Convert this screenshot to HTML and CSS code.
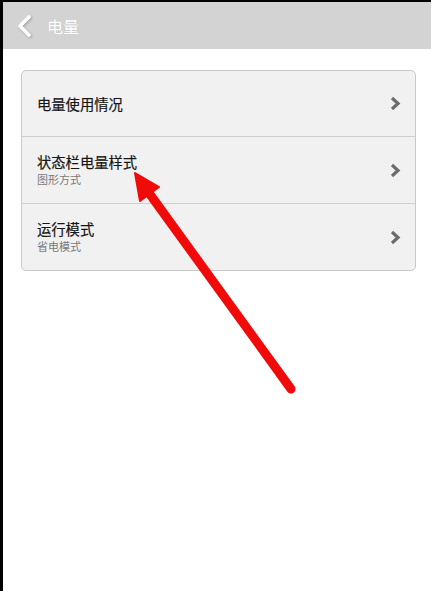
FILE: index.html
```html
<!DOCTYPE html>
<html lang="zh">
<head>
<meta charset="utf-8">
<link rel="stylesheet" href="styles.css">
</head>
<body>
<div class="screen">
  <header class="bar">
    <svg class="back" width="16" height="24" viewBox="0 0 16 24">
      <path d="M13 3 L4 12 L13 21" fill="none" stroke="#ffffff" stroke-width="3.6" stroke-linecap="round" stroke-linejoin="round"/>
    </svg>
    <span class="title">电量</span>
  </header>
  <main class="content">
    <div class="card">
      <div class="row">
        <div class="texts"><div class="main">电量使用情况</div></div>
        <svg class="chev" width="11" height="15" viewBox="0 0 11 15"><path d="M2 2 L8 7.5 L2 13" fill="none" stroke="#6c6c6c" stroke-width="3.2"/></svg>
      </div>
      <div class="row">
        <div class="texts"><div class="main">状态栏电量样式</div><div class="sub">图形方式</div></div>
        <svg class="chev" width="11" height="15" viewBox="0 0 11 15"><path d="M2 2 L8 7.5 L2 13" fill="none" stroke="#6c6c6c" stroke-width="3.2"/></svg>
      </div>
      <div class="row">
        <div class="texts"><div class="main">运行模式</div><div class="sub">省电模式</div></div>
        <svg class="chev" width="11" height="15" viewBox="0 0 11 15"><path d="M2 2 L8 7.5 L2 13" fill="none" stroke="#6c6c6c" stroke-width="3.2"/></svg>
      </div>
    </div>
  </main>
  <svg class="arrow" width="431" height="591" viewBox="0 0 431 591">
    <line x1="149" y1="193" x2="291" y2="389" stroke="#f10a0a" stroke-width="9" stroke-linecap="round"/>
    <polygon points="135,173 159,187 140,201" fill="#f10a0a" stroke="#f10a0a" stroke-width="2" stroke-linejoin="round"/>
  </svg>
</div>
</body>
</html>
```
FILE: styles.css
```css
html, body {
  margin: 0;
  padding: 0;
  background: #000;
}
.screen {
  position: relative;
  width: 428px;
  height: 589px;
  margin: 2px 0 0 3px;
  background: #fff;
  font-family: "Noto Sans CJK SC", "Noto Sans", sans-serif;
  overflow: hidden;
}
.bar {
  height: 47px;
  background: #d3d3d3;
  display: flex;
  align-items: center;
  padding-left: 13px;
  gap: 15px;
}
.back {
  filter: drop-shadow(1px 1px 1px rgba(0,0,0,0.25));
}
.title {
  color: #fff;
  font-size: 16px;
  text-shadow: 0 0 1px rgba(0,0,0,0.1);
}
.content {
  padding: 21px 15px 0 18px;
}
.card {
  border: 1px solid #c9c9c9;
  border-radius: 5px;
  background: #f1f1f1;
  overflow: hidden;
}
.row {
  height: 66px;
  display: flex;
  align-items: center;
  justify-content: space-between;
  padding: 0 14px 0 15px;
  border-top: 1px solid #cfcfcf;
}
.row:first-child {
  height: 65px;
  border-top: none;
}
.main {
  font-size: 14.3px;
  color: #151515;
  line-height: 18px;
  -webkit-text-stroke: 0.2px #151515;
}
.sub {
  font-size: 11px;
  color: #7a7a7a;
  line-height: 15px;
  margin-top: 1px;
}
.arrow {
  position: absolute;
  left: -3px;
  top: -2px;
  pointer-events: none;
}
```
